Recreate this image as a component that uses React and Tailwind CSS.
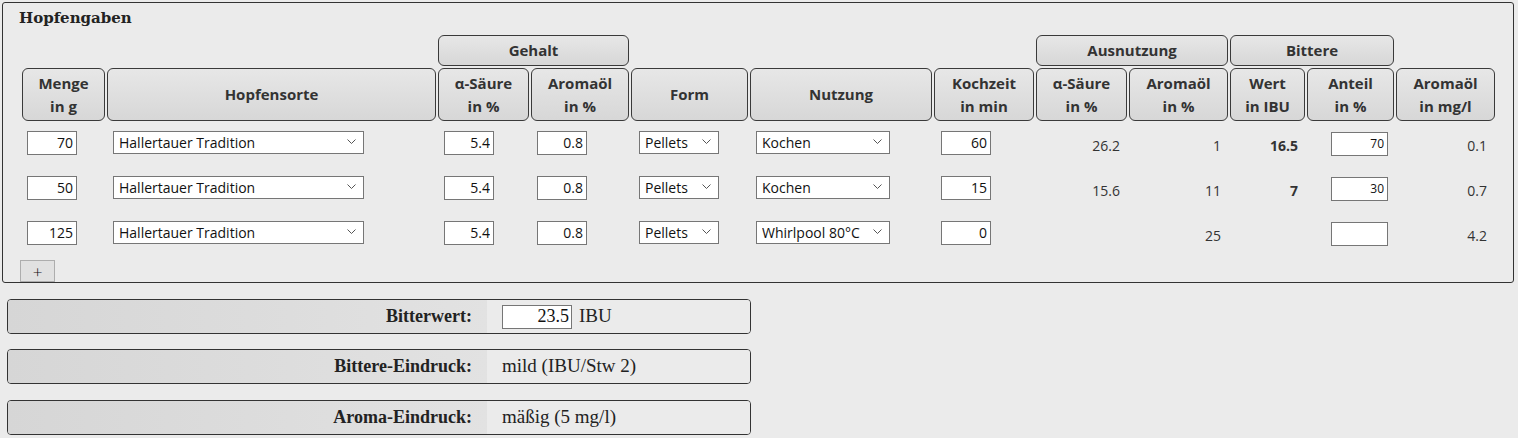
import React from 'react';

const sans = { fontFamily: '"Open Sans", "Noto Sans", sans-serif' };

const Chevron = () => (
  <svg className="pointer-events-none absolute right-[8px] top-[9px]" width="9" height="5" viewBox="0 0 9 5">
    <path d="M0.5 0.5 L4.5 4.5 L8.5 0.5" fill="none" stroke="#555" strokeWidth="1" />
  </svg>
);

const Select = ({ value, width, ml }) => (
  <div className={`relative h-[23px] ${ml}`} style={{ width }}>
    <select
      defaultValue={value}
      className="h-[23px] w-full appearance-none border border-[#767676] bg-white pl-[5px] text-[14px] leading-[21px] text-[#111] outline-none"
      style={sans}
    >
      <option>{value}</option>
    </select>
    <Chevron />
  </div>
);

const NumInput = ({ value, width = 50, ml, small }) => (
  <input
    defaultValue={value}
    className={`h-[24px] border border-[#767676] bg-white pr-[3px] text-right text-[#111] outline-none ${small ? 'text-[12px]' : 'text-[14px]'} ${ml}`}
    style={{ ...sans, width }}
  />
);

const Head = ({ children, colSpan, h = 'h-[53px]' }) => (
  <th
    colSpan={colSpan}
    className={`${h} rounded-[6px] border border-[#3a3a3a] bg-gradient-to-b from-[#e7e7e7] to-[#d7d7d7] p-0 text-center align-middle text-[15px] font-bold leading-[23px] text-[#333]`}
  >
    {children}
  </th>
);

const rows = [
  { menge: '70', alpha: '26.2', aroma: '1', ibu: '16.5', anteil: '70', mgl: '0.1', nutzung: 'Kochen', zeit: '60' },
  { menge: '50', alpha: '15.6', aroma: '11', ibu: '7', anteil: '30', mgl: '0.7', nutzung: 'Kochen', zeit: '15' },
  { menge: '125', alpha: '', aroma: '25', ibu: '', anteil: '', mgl: '4.2', nutzung: 'Whirlpool 80°C', zeit: '0' },
];

const widths = [83, 329, 91, 98, 117, 182, 100, 91, 99, 75, 87, 99];

const Summary = ({ label, children, mt }) => (
  <div className={`${mt} ml-[7px] flex h-[35px] w-[744px] overflow-hidden rounded-[4px] border border-[#333]`}>
    <div
      className="flex w-[479px] items-center justify-end bg-gradient-to-r from-[#d6d6d6] to-[#e2e2e2] pr-[15px] text-[18px] font-bold text-[#222]"
      style={{ fontFamily: '"Liberation Serif", serif' }}
    >
      {label}
    </div>
    <div
      className="flex flex-1 items-center bg-[#ebebeb] pl-[15px] text-[19px] text-[#222]"
      style={{ fontFamily: '"Liberation Serif", serif' }}
    >
      {children}
    </div>
  </div>
);

export default function App() {
  const cell = 'p-0 align-top';
  const txt = 'p-0 pr-[7px] pt-[13px] align-top text-right text-[14px] leading-[20px] text-[#333]';
  return (
    <div className="min-h-screen bg-[#ebebeb] pt-[2px]" style={sans}>
      <div className="ml-[2px] w-[1512px] rounded-[3px] border border-[#333] pl-[17px] pt-[5px]">
        <div
          className="ml-[-1px] h-[20px] text-[15px] font-bold leading-[20px] text-[#222]"
          style={{ fontFamily: '"DejaVu Serif", serif' }}
        >
          Hopfengaben
        </div>
        <table className="mt-[5px] table-fixed border-separate border-spacing-[2px]" style={{ width: 1477 }}>
          <colgroup>
            {widths.map((w, i) => (
              <col key={i} style={{ width: w }} />
            ))}
          </colgroup>
          <thead>
            <tr>
              <th colSpan={2} className="p-0" />
              <Head colSpan={2} h="h-[31px]">Gehalt</Head>
              <th colSpan={3} className="p-0" />
              <Head colSpan={2} h="h-[31px]">Ausnutzung</Head>
              <Head colSpan={2} h="h-[31px]">Bittere</Head>
              <th className="p-0" />
            </tr>
            <tr>
              <Head>Menge<br />in g</Head>
              <Head>Hopfensorte</Head>
              <Head>α-Säure<br />in %</Head>
              <Head>Aromaöl<br />in %</Head>
              <Head>Form</Head>
              <Head>Nutzung</Head>
              <Head>Kochzeit<br />in min</Head>
              <Head>α-Säure<br />in %</Head>
              <Head>Aromaöl<br />in %</Head>
              <Head>Wert<br />in IBU</Head>
              <Head>Anteil<br />in %</Head>
              <Head>Aromaöl<br />in mg/l</Head>
            </tr>
          </thead>
          <tbody>
            {rows.map((r, i) => (
              <tr key={i} className="h-[43px]">
                <td className={`${cell} pt-[7px]`}><NumInput value={r.menge} ml="ml-[5px]" /></td>
                <td className={`${cell} pt-[7px]`}><Select value="Hallertauer Tradition" width={251} ml="ml-[6px]" /></td>
                <td className={`${cell} pt-[7px]`}><NumInput value="5.4" ml="ml-[6px]" /></td>
                <td className={`${cell} pt-[7px]`}><NumInput value="0.8" ml="ml-[6px]" /></td>
                <td className={`${cell} pt-[7px]`}><Select value="Pellets" width={80} ml="ml-[8px]" /></td>
                <td className={`${cell} pt-[7px]`}><Select value={r.nutzung} width={134} ml="ml-[6px]" /></td>
                <td className={`${cell} pt-[7px]`}><NumInput value={r.zeit} ml="ml-[7px]" /></td>
                <td className={txt}>{r.alpha}</td>
                <td className={txt}>{r.aroma}</td>
                <td className={`${txt} font-bold`}>{r.ibu}</td>
                <td className={`${cell} pt-[7px]`}><NumInput value={r.anteil} width={57} ml="ml-[24px]" small /></td>
                <td className={`${txt} pr-[8px]`}>{r.mgl}</td>
              </tr>
            ))}
          </tbody>
        </table>
        <button className="mt-[2px] flex h-[22px] w-[35px] items-center justify-center border border-[#adadad] bg-[#e1e1e1] text-[17px] font-light leading-none text-[#111]">
          +
        </button>
      </div>

      <Summary label="Bitterwert:" mt="mt-[16px]">
        <input
          defaultValue="23.5"
          className="h-[24px] w-[70px] border border-[#767676] bg-white pr-[2px] text-right text-[18px] text-[#111] outline-none"
          style={{ fontFamily: '"Liberation Serif", serif' }}
        />
        <span className="ml-[7px]">IBU</span>
      </Summary>
      <Summary label="Bittere-Eindruck:" mt="mt-[15px]">mild (IBU/Stw 2)</Summary>
      <Summary label="Aroma-Eindruck:" mt="mt-[16px]">mäßig (5 mg/l)</Summary>
    </div>
  );
}
